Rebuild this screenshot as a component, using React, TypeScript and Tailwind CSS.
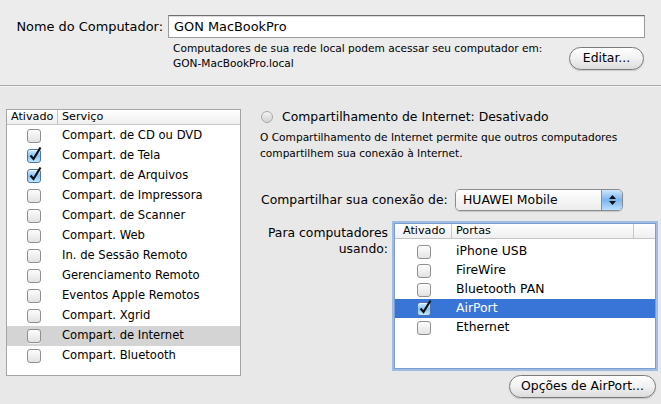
import React from "react";

const F = "font-['DejaVu_Sans',sans-serif]";

function CheckBox({ checked }: { checked?: boolean }) {
  if (checked) {
    return (
      <div className="relative w-[14px] h-[14px]">
        <div className="w-[14px] h-[14px] rounded-[3px] border border-[#4f74ad] bg-linear-to-b from-[#d4ecff] via-[#86c2f5] to-[#c4e8ff] shadow-[inset_0_1px_0_rgba(255,255,255,0.6)]" />
        <svg className="absolute left-[1px] top-[-3px]" width="15" height="16" viewBox="0 0 15 16">
          <path d="M2.5 9.5 L5.5 13 L12.5 1.5" fill="none" stroke="#111" strokeWidth="2.2" strokeLinejoin="miter" />
        </svg>
      </div>
    );
  }
  return (
    <div className="w-[14px] h-[14px] rounded-[3px] border border-[#8f8f8f] bg-linear-to-b from-[#fdfdfd] via-[#f0f0f0] to-[#e2e2e2] shadow-[0_1px_0_rgba(255,255,255,0.7)]" />
  );
}

function AquaButton({ children, className = "" }: { children: React.ReactNode; className?: string }) {
  return (
    <div
      className={`flex items-center justify-center rounded-full border border-[#7a7a7a] bg-linear-to-b from-[#ffffff] via-[#f1f1f1] to-[#dcdcdc] shadow-[0_1px_1px_rgba(0,0,0,0.15)] text-[12.4px] text-black ${className}`}
    >
      {children}
    </div>
  );
}

const services: { name: string; on?: boolean; sel?: boolean }[] = [
  { name: "Compart. de CD ou DVD" },
  { name: "Compart. de Tela", on: true },
  { name: "Compart. de Arquivos", on: true },
  { name: "Compart. de Impressora" },
  { name: "Compart. de Scanner" },
  { name: "Compart. Web" },
  { name: "In. de Sessão Remoto" },
  { name: "Gerenciamento Remoto" },
  { name: "Eventos Apple Remotos" },
  { name: "Compart. Xgrid" },
  { name: "Compart. de Internet", sel: true },
  { name: "Compart. Bluetooth" },
];

const ports: { name: string; on?: boolean; sel?: boolean }[] = [
  { name: "iPhone USB" },
  { name: "FireWire" },
  { name: "Bluetooth PAN" },
  { name: "AirPort", on: true, sel: true },
  { name: "Ethernet" },
];

export default function App() {
  return (
    <div className={`w-[661px] h-[404px] overflow-hidden bg-[#e8e8e8] text-black ${F}`}>
      {/* Top section */}
      <div className="h-[86px] bg-[#ececec] border-b border-[#a8a8a8] pt-[15px]">
        <div className="flex items-center">
          <div className="w-[164px] text-right text-[12.9px] pr-[1px] pt-[1px]">Nome do Computador:</div>
          <div className="ml-[4px] w-[477px] h-[23px] border border-[#9b9b9b] border-t-[#6f6f6f] bg-white flex items-center pl-[5px] text-[12.9px] shadow-[inset_0_1px_1px_rgba(0,0,0,0.15)]">
            GON MacBookPro
          </div>
        </div>
        <div className="flex items-start mt-[3px] ml-[173px]">
          <div className="text-[10.6px] leading-[15px] w-[390px]">
            <div>Computadores de sua rede local podem acessar seu computador em:</div>
            <div>GON-MacBookPro.local</div>
          </div>
          <AquaButton className="ml-[6px] mt-[6px] w-[75px] h-[23px]">Editar...</AquaButton>
        </div>
      </div>
      <div className="h-px bg-[#f6f6f6]" />

      {/* Lower section */}
      <div className="flex pl-[6px] pt-[22px]">
        {/* Left table */}
        <div className="w-[235px] h-[267px] border border-[#a5a5a5] bg-white">
          <div className="flex h-[15px] border-b border-[#c6c6c6] bg-linear-to-b from-white to-[#efefef] text-[11.2px] leading-[14px]">
            <div className="w-[51px] border-r border-[#c6c6c6] pl-[4px]">Ativado</div>
            <div className="pl-[4px]">Serviço</div>
          </div>
          <div className="h-px" />
          {services.map((s) => (
            <div key={s.name} className={`flex items-center h-[20px] text-[11.6px] ${s.sel ? "bg-[#d4d4d4]" : ""}`}>
              <div className="w-[55px] flex justify-center pr-[1px]">
                <CheckBox checked={s.on} />
              </div>
              <div>{s.name}</div>
            </div>
          ))}
        </div>

        {/* Right panel */}
        <div className="ml-[18px] w-[398px]">
          <div className="flex items-center h-[14px] mt-[1px]">
            <div className="w-[12px] h-[12px] rounded-full border border-[#a9a9a9] bg-linear-to-b from-[#f4f4f4] to-[#d2d2d2] ml-[2px]" />
            <div className="ml-[9px] text-[12.4px]">Compartilhamento de Internet: Desativado</div>
          </div>
          <div className="mt-[5px] text-[10.6px] leading-[16px] pl-[1px]">
            <div>O Compartilhamento de Internet permite que outros computadores</div>
            <div>compartilhem sua conexão à Internet.</div>
          </div>

          <div className="flex items-center mt-[28px] h-[22px]">
            <div className="text-[12.4px] w-[196px] pl-[2px]">Compartilhar sua conexão de:</div>
            <div className="flex w-[168px] h-[22px] rounded-[5px] border border-[#8c8c8c] overflow-hidden shadow-[0_1px_1px_rgba(0,0,0,0.15)]">
              <div className="flex-1 flex items-center pl-[7px] text-[12.4px] bg-linear-to-b from-white to-[#ececec]">HUAWEI Mobile</div>
              <div className="w-[21px] border-l border-[#7a8fb3] bg-linear-to-b from-[#cfe6fb] via-[#79b4ee] to-[#b8e0ff] flex flex-col items-center justify-center gap-[2px]">
                <svg width="7" height="4" viewBox="0 0 7 4"><path d="M3.5 0 L7 4 L0 4 Z" fill="#111" /></svg>
                <svg width="7" height="4" viewBox="0 0 7 4"><path d="M0 0 L7 0 L3.5 4 Z" fill="#111" /></svg>
              </div>
            </div>
          </div>

          <div className="flex mt-[12px]">
            <div className="w-[129px] text-right text-[12.4px] leading-[16px] pt-[2px]">
              <div>Para computadores</div>
              <div>usando:</div>
            </div>
            <div className="ml-[6px] w-[262px] h-[146px] border border-[#7e9ccc] bg-white shadow-[0_0_0_2px_#9dbde6]">
              <div className="flex h-[15px] border-b border-[#c6c6c6] bg-linear-to-b from-white to-[#efefef] text-[11.2px] leading-[14px]">
                <div className="w-[57px] border-r border-[#c6c6c6] pl-[8px]">Ativado</div>
                <div className="w-[182px] border-r border-[#c6c6c6] pl-[4px]">Portas</div>
              </div>
              <div className="h-[3px]" />
              {ports.map((p) => (
                <div key={p.name} className={`flex items-center h-[19px] text-[12.4px] ${p.sel ? "bg-[#3875d7] text-white" : ""}`}>
                  <div className="w-[57px] flex justify-center pl-[1px]">
                    <CheckBox checked={p.on} />
                  </div>
                  <div className="pl-[4px]">{p.name}</div>
                </div>
              ))}
            </div>
          </div>

          <div className="flex justify-end mt-[6px] pr-[1px]">
            <AquaButton className="w-[147px] h-[23px]">Opções de AirPort...</AquaButton>
          </div>
        </div>
      </div>
    </div>
  );
}
